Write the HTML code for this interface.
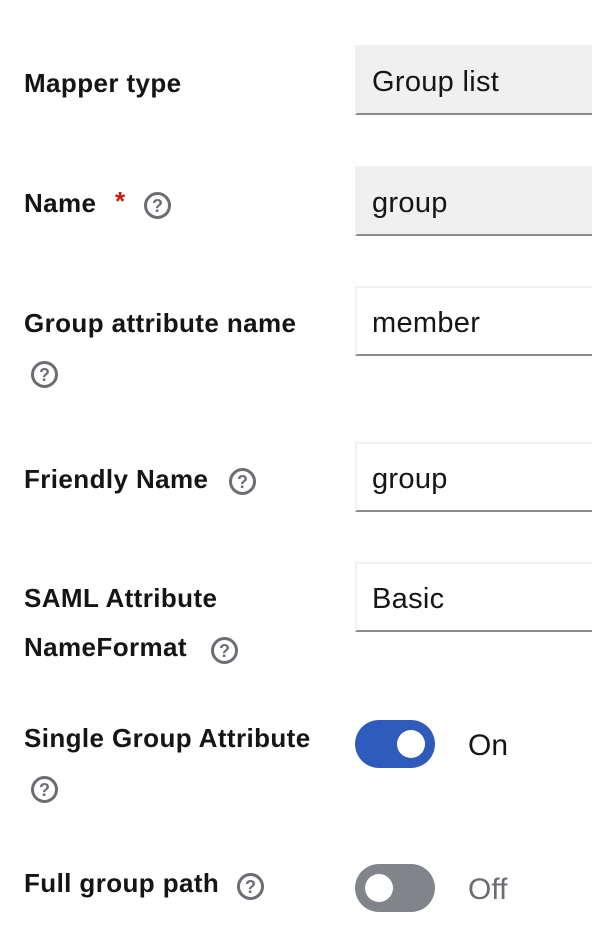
<!DOCTYPE html>
<html><head><meta charset="utf-8"><style>
html,body{margin:0;padding:0;background:#fff;width:592px;height:936px;overflow:hidden;font-family:"Liberation Sans",sans-serif;color:#151515}
.l{position:absolute;left:24px;font-weight:bold;font-size:26px;letter-spacing:0.4px;line-height:48px;white-space:nowrap}
.in{position:absolute;left:355px;width:260px;height:70px;box-sizing:border-box;border:2px solid #f0f0f0;border-bottom:2px solid #8a8d90;font-size:29px;letter-spacing:0.3px;padding-left:15px;line-height:70px;background:#fff}
.ro{background:#f0f0f0}
.q{position:absolute;width:21px;height:21px;border:3px solid #6a6e73;border-radius:50%;color:#6a6e73;font-weight:bold;font-size:18px;line-height:22px;text-align:center}
.t{position:absolute;left:355px;width:80px;height:48px;border-radius:24px}
.k{position:absolute;top:10px;width:28px;height:28px;border-radius:50%;background:#fff}
.tx{position:absolute;left:468px;font-size:30px;line-height:48px}
.star{color:#c9190b;font-size:26px;position:absolute;font-weight:bold}
</style></head><body>
<div class="l" style="top:59px">Mapper type</div>
<div class="in ro" style="top:45px">Group list</div>

<div class="l" style="top:179px">Name</div><span class="star" style="left:115px;top:186px">*</span>
<div class="q" style="left:144px;top:192px">?</div>
<div class="in ro" style="top:166px">group</div>

<div class="l" style="top:299px">Group attribute name</div>
<div class="q" style="left:31px;top:361px">?</div>
<div class="in" style="top:286px">member</div>

<div class="l" style="top:455px">Friendly Name</div>
<div class="q" style="left:229px;top:468px">?</div>
<div class="in" style="top:442px">group</div>

<div class="l" style="top:574px">SAML Attribute</div>
<div class="l" style="top:623px">NameFormat</div>
<div class="q" style="left:211px;top:637px">?</div>
<div class="in" style="top:562px">Basic</div>

<div class="l" style="top:714px">Single Group Attribute</div>
<div class="q" style="left:31px;top:776px">?</div>
<div class="t" style="top:720px;background:#2f5bbf"><div class="k" style="left:42px"></div></div>
<div class="tx" style="top:722px">On</div>

<div class="l" style="top:859px">Full group path</div>
<div class="q" style="left:237px;top:873px">?</div>
<div class="t" style="top:864px;background:#818488"><div class="k" style="left:10px"></div></div>
<div class="tx" style="top:866px;color:#6a6e73">Off</div>
</body></html>
